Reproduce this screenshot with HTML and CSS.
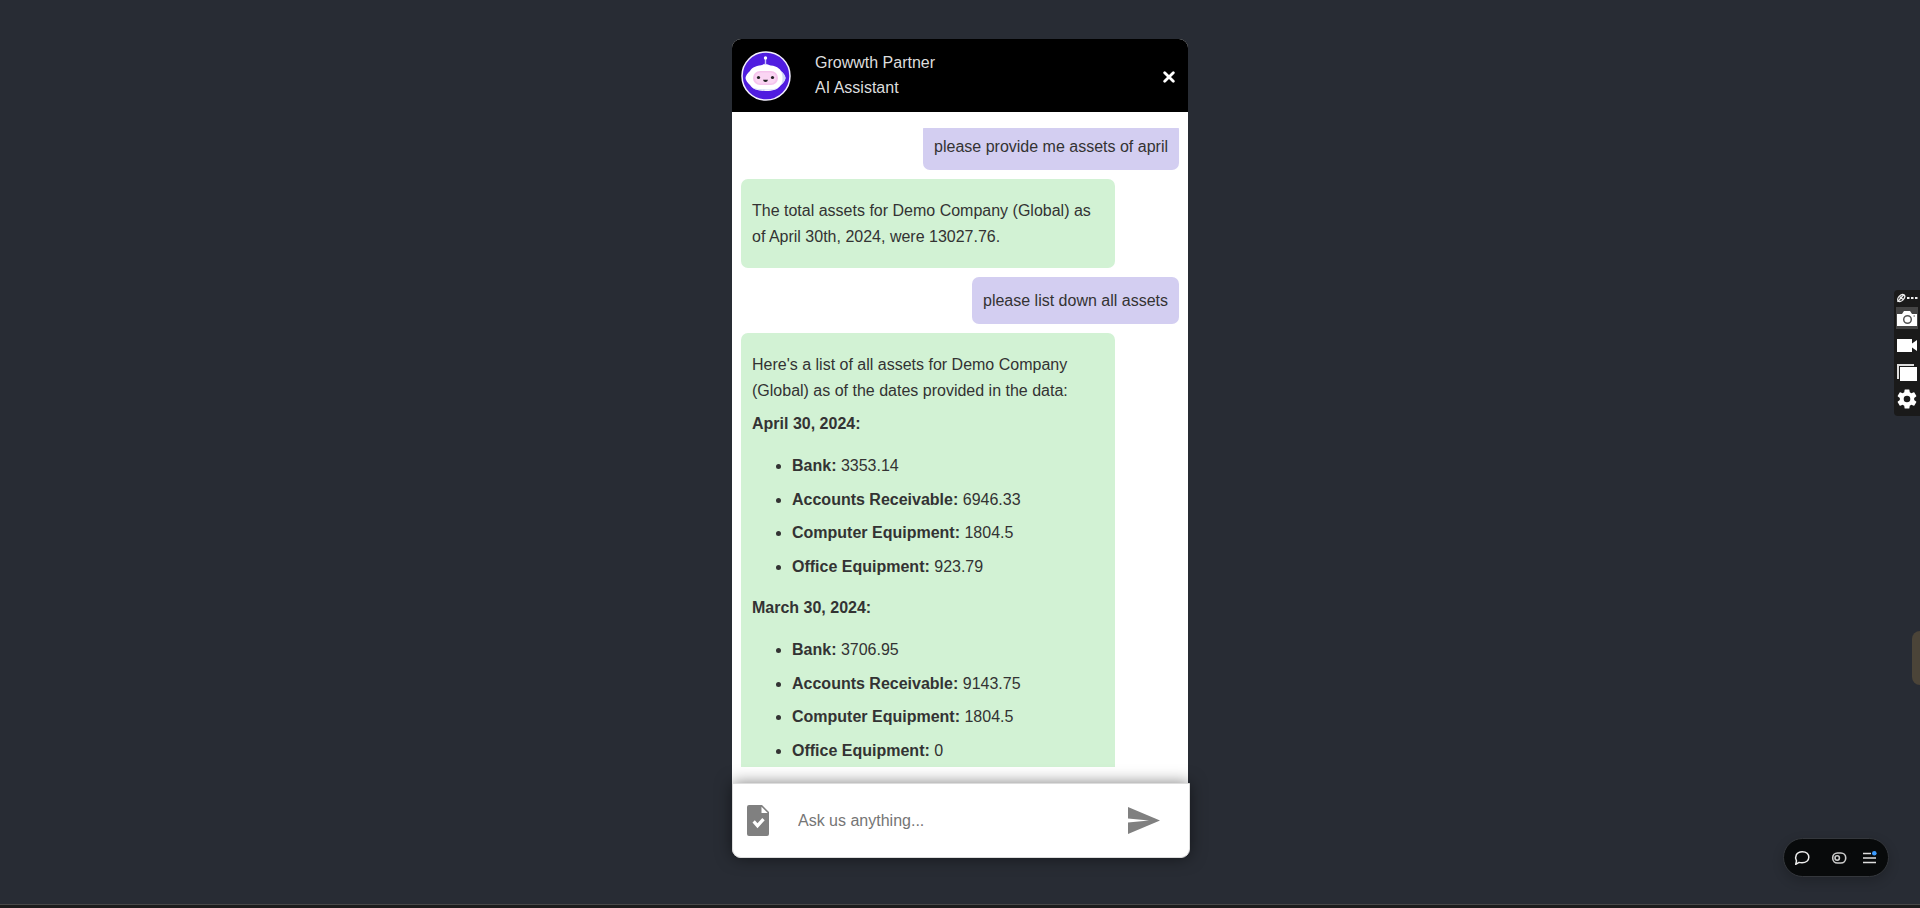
FILE: index.html
```html
<!DOCTYPE html>
<html lang="en">
<head>
<meta charset="utf-8">
<meta name="viewport" content="width=device-width, initial-scale=1">
<title>Growwth Partner AI Assistant</title>
<link rel="stylesheet" href="styles.css">
</head>
<body>
<main class="page">
  <section class="chat" aria-label="AI Assistant chat">
    <header class="chat-header">
      <svg class="avatar" viewBox="0 0 50 50" aria-hidden="true">
        <circle cx="25" cy="25" r="24" fill="#501de0" stroke="#f4f0ff" stroke-width="1.5"/>
        <path d="M24.5 16V8" stroke="#c9c3ff" stroke-width="1.4"/>
        <circle cx="24.5" cy="7" r="1.7" fill="#fff"/>
        <path d="M19 15.5Q24.5 10 30 15.5Z" fill="#dcd6ff"/>
        <path d="M9 20C11 16 17 14 24.5 14S38 16 40 20C42 22 44.500 24.500 44.500 27S42 32 40 34C37 38.500 32 40 24.500 40S12 38.500 9 34C7 32 4.500 29.500 4.500 27S7 22 9 20Z" fill="#fff"/>
        <path d="M40 20C42 22 44.500 24.500 44.500 27S42 32 40 34C42 29 42 25 40 20ZM12 37C20 39 30 39 37 37C33 40 16 40 12 37Z" fill="#cfd8f6"/>
        <rect x="12" y="20" width="25" height="14" rx="7" fill="#f5c3ec"/>
        <rect x="14" y="21.5" width="21" height="11" rx="5.5" fill="#fad5f3"/>
        <circle cx="17.5" cy="26.500" r="1.600" fill="#222"/>
        <circle cx="31.5" cy="26.500" r="1.600" fill="#222"/>
        <path d="M22 28.800H27Q26.500 31 24.500 31T22 28.800Z" fill="#222"/>
      </svg>
      <div class="chat-title"><div>Growwth Partner</div><div>AI Assistant</div></div>
      <button class="icon-button close" type="button" aria-label="Close">
        <svg width="12" height="12" viewBox="0 0 12 12"><path d="M1.700 1.700 10.300 10.300M10.300 1.700 1.700 10.300" stroke="#fff" stroke-width="2.800" stroke-linecap="round"/></svg>
      </button>
    </header>

    <div class="chat-body">
      <div class="scroller">
        <div class="messages">
          <div class="message user">please provide me assets of april</div>
          <div class="message bot"><p>The total assets for Demo Company (Global) as of April 30th, 2024, were 13027.76.</p></div>
          <div class="message user">please list down all assets</div>
          <div class="message bot">
            <p>Here's a list of all assets for Demo Company (Global) as of the dates provided in the data:</p>
            <p><strong>April 30, 2024:</strong></p>
            <ul>
              <li><strong>Bank:</strong> 3353.14</li>
              <li><strong>Accounts Receivable:</strong> 6946.33</li>
              <li><strong>Computer Equipment:</strong> 1804.5</li>
              <li><strong>Office Equipment:</strong> 923.79</li>
            </ul>
            <p><strong>March 30, 2024:</strong></p>
            <ul>
              <li><strong>Bank:</strong> 3706.95</li>
              <li><strong>Accounts Receivable:</strong> 9143.75</li>
              <li><strong>Computer Equipment:</strong> 1804.5</li>
              <li><strong>Office Equipment:</strong> 0</li>
            </ul>
          </div>
        </div>
      </div>
    </div>

    <form class="composer">
      <button class="icon-button" type="button" aria-label="Attach a document">
        <svg width="24" height="31" viewBox="0 0 24 31"><path fill-rule="evenodd" fill="#808080" d="M3 0H16L23 7V29Q23 31 21 31H3Q1 31 1 29V2Q1 0 3 0ZM15.500 1.800V8H21.700ZM6.500 17.500 11.500 23.300 18.700 15.300 16.300 13 11.500 18.300 8.800 15.300Z"/></svg>
      </button>
      <input class="prompt" type="text" placeholder="Ask us anything..." aria-label="Message">
      <button class="icon-button" type="submit" aria-label="Send">
        <svg width="32" height="27" viewBox="0 0 32 27"><path fill="#808080" d="M0 0 32 13.500 0 27V15.500L21 13.500 0 11.500Z"/></svg>
      </button>
    </form>
  </section>
</main>
<div class="status-bar"></div>

<aside class="capture-dock" aria-label="Capture tools">
  <svg width="22" height="10" viewBox="0 0 22 10" aria-hidden="true"><g fill="none" stroke="#eee" stroke-width="1.300"><ellipse cx="5.200" cy="5" rx="4.200" ry="2.600" transform="rotate(-45 5.200 5)"/><path d="M1.500 8.700 8 1.500M3.500 3.500 7 6.500"/></g><path fill="#eee" d="M11 4h2.500v2h-2.500zM15 4h2.500v2h-2.500zM19 4h2.500v2h-2.500z"/></svg>
  <div class="tools">
    <button class="icon-button tool active" type="button" aria-label="Screenshot">
      <svg width="20" height="15" viewBox="0 0 20 15"><path fill="#fff" d="M0 3H5L7 0H13L15 3H20V15H0Z"/><circle cx="10.500" cy="8.500" r="3.800" fill="#fff" stroke="#555" stroke-width="1.500"/><path d="M16.500 5h1.500" stroke="#555"/></svg>
    </button>
    <button class="icon-button tool" type="button" aria-label="Record video">
      <svg width="20" height="13" viewBox="0 0 20 13"><path fill="#fff" d="M0 0H15V4.500L20 1V12L15 8.500V13H0Z"/></svg>
    </button>
    <button class="icon-button tool" type="button" aria-label="Gallery">
      <svg width="20" height="17" viewBox="0 0 20 17"><path fill="#ddd" d="M0 0H17V2H2V15H0Z"/><path fill="#fff" d="M3 3H20V17H3Z"/></svg>
    </button>
    <button class="icon-button tool" type="button" aria-label="Settings">
      <svg width="20" height="20" viewBox="2 2 20 20"><path fill="#fff" d="M19.140 12.940c.04-.3.060-.61.060-.94s-.02-.64-.07-.94l2.030-1.580a.49.49 0 0 0 .12-.61l-1.920-3.320a.49.49 0 0 0-.59-.22l-2.390.96a7 7 0 0 0-1.620-.94l-.36-2.540a.48.48 0 0 0-.48-.41h-3.840a.47.47 0 0 0-.47.410l-.36 2.540a7 7 0 0 0-1.620.94l-2.390-.96a.48.48 0 0 0-.59.220L2.740 8.870a.47.47 0 0 0 .12.610l2.030 1.580c-.05.3-.09.63-.09.940s.02.640.07.940l-2.030 1.580a.49.49 0 0 0-.12.610l1.920 3.320c.12.220.37.290.59.220l2.390-.96c.5.380 1.030.7 1.620.94l.36 2.540c.05.240.24.410.48.410h3.840c.24 0 .44-.17.470-.41l.36-2.540a7 7 0 0 0 1.620-.94l2.390.96c.22.080.47 0 .59-.22l1.920-3.320a.47.47 0 0 0-.12-.61zM12 15.300a3.300 3.300 0 1 1 0-6.600 3.300 3.300 0 0 1 0 6.600"/></svg>
    </button>
  </div>
</aside>
<div class="side-tab"></div>

<nav class="pill" aria-label="Page toolbar">
  <button class="icon-button" type="button" aria-label="Comments">
    <svg width="16" height="16" viewBox="0 0 16 16"><path fill="none" stroke="#eee" stroke-width="1.500" stroke-linejoin="round" d="M1.700 14.300 2.500 10.800C.5 7 2 1.700 8.300 1.700C12.500 1.700 14.800 4.300 14.800 7.300C14.800 10.500 12 12.800 8 12.800C6.800 12.800 6 12.700 5 12.400Z"/></svg>
  </button>
  <button class="icon-button" type="button" aria-label="Toggle flags">
    <svg width="16" height="16" viewBox="0 0 16 16"><g fill="none" stroke="#ccc" stroke-width="1.600"><rect x="1.700" y="3" width="13" height="10" rx="4.800"/><circle cx="6.200" cy="8" r="2.200"/></g></svg>
  </button>
  <button class="icon-button menu" type="button" aria-label="Menu">
    <svg width="16" height="16" viewBox="0 0 16 16"><path d="M1 3.500H9M1 8H14M1 12.500H14" stroke="#ddd" stroke-width="1.700"/><circle cx="12.300" cy="3.200" r="2.300" fill="#3b9bff"/></svg>
  </button>
</nav>
</body>
</html>
```
FILE: styles.css
```css
* { box-sizing: border-box; }

body {
  margin: 0;
  height: 100vh;
  display: flex;
  flex-direction: column;
  background: #282c34;
  color: #333;
  font: 16px/1.6 "Liberation Sans", Arial, sans-serif;
  overflow: hidden;
}

.page {
  flex: 1;
  min-height: 0;
  display: flex;
  justify-content: center;
  padding: 39px 0 46px;
}

.status-bar {
  height: 4px;
  background: #1c1c1c;
  border-top: 1px solid #484848;
}

.icon-button {
  display: flex;
  align-items: center;
  justify-content: center;
  padding: 0;
  border: 0;
  background: none;
  cursor: pointer;
}

.chat {
  width: 456px;
  max-width: 100%;
  display: flex;
  flex-direction: column;
  background: #fff;
  border-radius: 9px;
}

.chat-header {
  display: flex;
  align-items: center;
  height: 73px;
  padding: 0 13px 0 9px;
  background: #000;
  color: #ddd;
  line-height: 25px;
  border-radius: 9px 9px 0 0;
}

.avatar { width: 50px; height: 50px; }
.chat-title { flex: 1; padding: 0 0 2px 24px; }
.close { padding-top: 2px; }

.chat-body {
  flex: 1;
  min-height: 0;
  padding: 16px 9px;
}

.scroller { height: 100%; overflow: hidden; }

.messages {
  display: flex;
  flex-direction: column;
  gap: 9px;
  margin-top: -5px;
}

.message {
  padding: 11px;
  border-radius: 7px;
}

.user { align-self: flex-end; line-height: 25px; background: #d3cef1; }
.bot { align-self: flex-start; width: 85.4%; background: #d2f2d4; }

.message p { margin: 8px 0; }
.message ul { margin: 16px 0; padding-left: 40px; }
.message li + li { margin-top: 8px; }

.composer {
  position: relative;
  display: flex;
  align-items: center;
  height: 75px;
  margin-right: -2px;
  padding: 0 29px 0 13px;
  background: #fff;
  border: 1px solid #ddd;
  border-radius: 0 0 9px 9px;
  box-shadow: 0 0 16px rgba(0, 0, 0, 0.5);
}

.prompt {
  flex: 1;
  min-width: 0;
  padding: 0;
  margin-left: 28px;
  border: 0;
  outline: 0;
  background: none;
  color: #333;
  font: inherit;
}

.prompt::placeholder { color: #757575; }

.capture-dock {
  position: fixed;
  top: 290px;
  right: 0;
  width: 26px;
  height: 126px;
  padding: 3px 2px;
  display: flex;
  flex-direction: column;
  gap: 4px;
  background: #1a1a1a;
  border-radius: 4px 0 0 4px;
}

.tools { display: flex; flex-direction: column; gap: 5px; }
.tool { width: 22px; height: 22px; }
.capture-dock svg { flex: none; }
.active { background: #444; }

.side-tab {
  position: fixed;
  top: 631px;
  right: 0;
  width: 8px;
  height: 54px;
  background: #4b4438;
  border-radius: 8px 0 0 8px;
}

.pill {
  position: fixed;
  right: 31px;
  bottom: 31px;
  width: 106px;
  height: 39px;
  padding: 0 10px;
  display: flex;
  align-items: center;
  justify-content: space-between;
  background: #080a0b;
  border: 1px solid #34373c;
  border-radius: 20px;
  box-shadow: 0 4px 12px rgba(0, 0, 0, 0.2);
}

.menu { margin-left: -6px; }
```
